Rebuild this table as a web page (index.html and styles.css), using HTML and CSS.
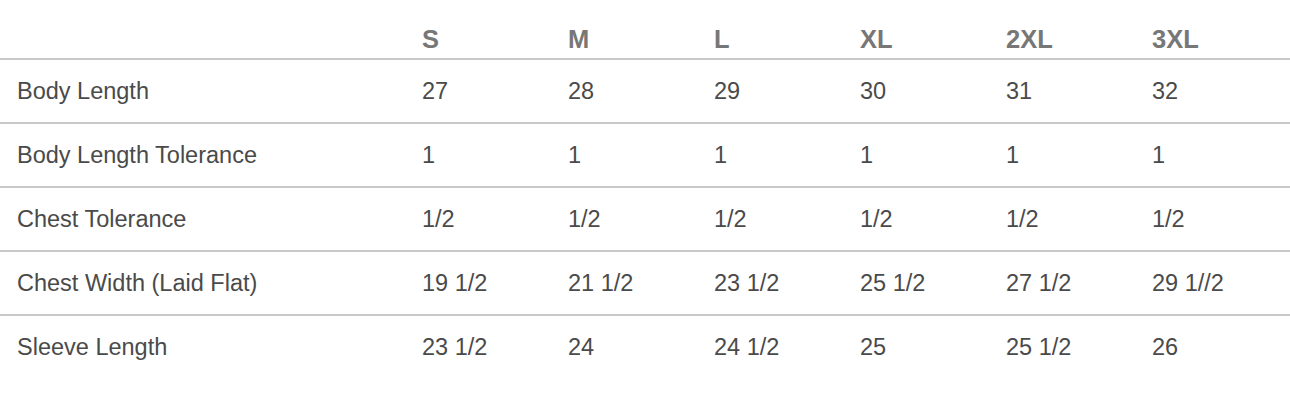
FILE: index.html
```html
<!DOCTYPE html>
<html lang="en">
<head>
<meta charset="utf-8">
<title>Size Chart</title>
<link rel="stylesheet" href="styles.css">
</head>
<body>
<table class="size-chart">
  <colgroup>
    <col class="col-label">
    <col class="col-size"><col class="col-size"><col class="col-size">
    <col class="col-size"><col class="col-size"><col>
  </colgroup>
  <thead>
    <tr class="head-row">
      <th></th><th>S</th><th>M</th><th>L</th><th>XL</th><th>2XL</th><th>3XL</th>
    </tr>
  </thead>
  <tbody>
    <tr><td>Body Length</td><td>27</td><td>28</td><td>29</td><td>30</td><td>31</td><td>32</td></tr>
    <tr><td>Body Length Tolerance</td><td>1</td><td>1</td><td>1</td><td>1</td><td>1</td><td>1</td></tr>
    <tr><td>Chest Tolerance</td><td>1/2</td><td>1/2</td><td>1/2</td><td>1/2</td><td>1/2</td><td>1/2</td></tr>
    <tr><td>Chest Width (Laid Flat)</td><td>19 1/2</td><td>21 1/2</td><td>23 1/2</td><td>25 1/2</td><td>27 1/2</td><td>29 1//2</td></tr>
    <tr><td>Sleeve Length</td><td>23 1/2</td><td>24</td><td>24 1/2</td><td>25</td><td>25 1/2</td><td>26</td></tr>
  </tbody>
</table>
</body>
</html>
```

FILE: styles.css
```css
html, body {
  margin: 0;
  padding: 0;
  background: #ffffff;
}

body {
  font-family: "Liberation Sans", Arial, sans-serif;
  color: #4a4a4a;
}

.size-chart {
  width: 1290px;
  border-collapse: collapse;
  table-layout: fixed;
}

.col-label { width: 405px; }
.col-size { width: 146px; }

.size-chart th,
.size-chart td {
  padding: 0 0 0 17px;
  text-align: left;
  white-space: nowrap;
}

.head-row th {
  box-sizing: border-box;
  height: 59px;
  font-size: 25.5px;
  font-weight: bold;
  color: #777777;
  vertical-align: bottom;
  padding-bottom: 6px;
  line-height: 26px;
  border-bottom: 2px solid #c8c8c8;
}

.size-chart tbody td {
  height: 62px;
  font-size: 23.5px;
  line-height: 26px;
  vertical-align: middle;
}

.size-chart tbody tr {
  border-bottom: 2px solid #c8c8c8;
}

.size-chart tbody tr:last-child {
  border-bottom: none;
}
```
